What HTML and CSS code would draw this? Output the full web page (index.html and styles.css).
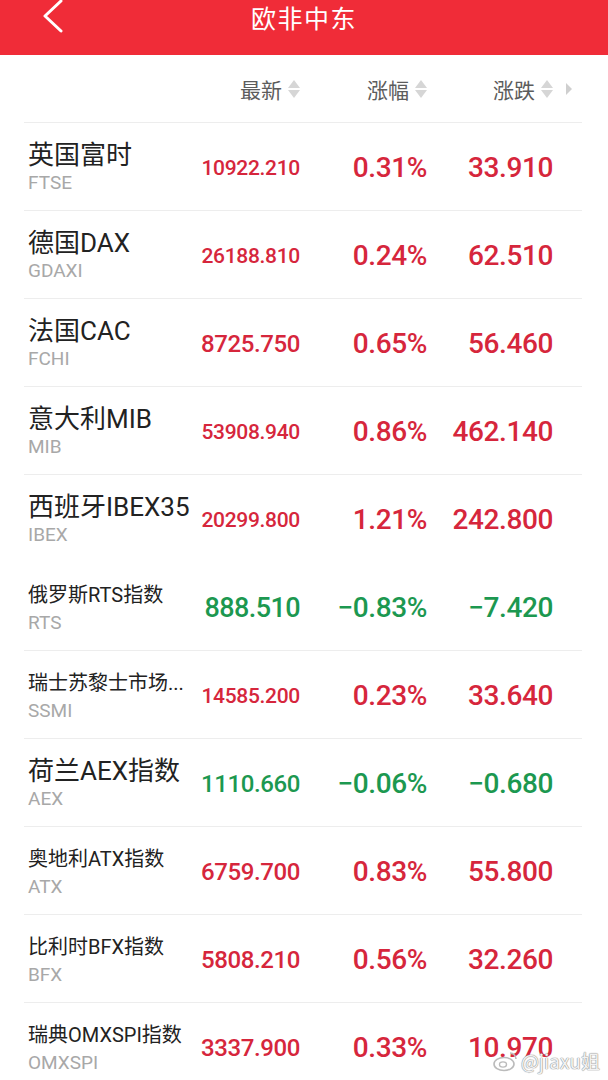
FILE: index.html
```html
<html>
<head>
    <meta charset="UTF-8">
    <meta name="viewport" content="width=device-width, initial-scale=1.0">
    <title>欧非中东</title>
    <link rel="stylesheet" href="styles.css">
</head>

<body>
<div class="page">
    <div class="top_bar">
        <svg class="back" width="24" height="34" viewBox="0 0 24 34">
            <polyline points="19,1 3,16 19,31" fill="none" stroke="#fff" stroke-width="3" stroke-linecap="round" stroke-linejoin="round"/>
        </svg>
        <div class="top_title">欧非中东</div>
    </div>

    <div class="list">
        <div class="row head">
            <div></div>
            <div class="col_head">最新<span class="sort"><i class="up"></i><i class="down"></i></span></div>
            <div class="col_head">涨幅<span class="sort"><i class="up"></i><i class="down"></i></span></div>
            <div class="col_head">涨跌<span class="sort"><i class="up"></i><i class="down"></i></span></div>
            <div class="more"><i></i></div>
        </div>

        <div class="row">
            <div class="name"><p class="big">英国富时</p><p class="code">FTSE</p></div>
            <div class="val red fit9">10922.210</div>
            <div class="val red">0.31%</div>
            <div class="val red">33.910</div>
        </div>
        <div class="row">
            <div class="name"><p class="big">德国DAX</p><p class="code">GDAXI</p></div>
            <div class="val red fit9">26188.810</div>
            <div class="val red">0.24%</div>
            <div class="val red">62.510</div>
        </div>
        <div class="row">
            <div class="name"><p class="big">法国CAC</p><p class="code">FCHI</p></div>
            <div class="val red fit8">8725.750</div>
            <div class="val red">0.65%</div>
            <div class="val red">56.460</div>
        </div>
        <div class="row">
            <div class="name"><p class="big">意大利MIB</p><p class="code">MIB</p></div>
            <div class="val red fit9">53908.940</div>
            <div class="val red">0.86%</div>
            <div class="val red">462.140</div>
        </div>
        <div class="row no_line">
            <div class="name"><p class="big">西班牙IBEX35</p><p class="code">IBEX</p></div>
            <div class="val red fit9">20299.800</div>
            <div class="val red">1.21%</div>
            <div class="val red">242.800</div>
        </div>
        <div class="row">
            <div class="name"><p class="small">俄罗斯RTS指数</p><p class="code">RTS</p></div>
            <div class="val green fit7">888.510</div>
            <div class="val green">−0.83%</div>
            <div class="val green">−7.420</div>
        </div>
        <div class="row">
            <div class="name"><p class="small">瑞士苏黎士市场...</p><p class="code">SSMI</p></div>
            <div class="val red fit9">14585.200</div>
            <div class="val red">0.23%</div>
            <div class="val red">33.640</div>
        </div>
        <div class="row">
            <div class="name"><p class="big">荷兰AEX指数</p><p class="code">AEX</p></div>
            <div class="val green fit8">1110.660</div>
            <div class="val green">−0.06%</div>
            <div class="val green">−0.680</div>
        </div>
        <div class="row">
            <div class="name"><p class="small">奥地利ATX指数</p><p class="code">ATX</p></div>
            <div class="val red fit8">6759.700</div>
            <div class="val red">0.83%</div>
            <div class="val red">55.800</div>
        </div>
        <div class="row">
            <div class="name"><p class="small">比利时BFX指数</p><p class="code">BFX</p></div>
            <div class="val red fit8">5808.210</div>
            <div class="val red">0.56%</div>
            <div class="val red">32.260</div>
        </div>
        <div class="row">
            <div class="name"><p class="small">瑞典OMXSPI指数</p><p class="code">OMXSPI</p></div>
            <div class="val red fit8">3337.900</div>
            <div class="val red">0.33%</div>
            <div class="val red">10.970</div>
        </div>
    </div>

    <div class="mark">
        <svg width="26" height="22" viewBox="0 0 26 22">
            <ellipse cx="11" cy="14" rx="10" ry="6.5" fill="none" stroke="#bbb" stroke-width="1.6"/>
            <ellipse cx="10" cy="14.5" rx="3.5" ry="2.6" fill="none" stroke="#bbb" stroke-width="1.4"/>
            <path d="M17 3 a6 6 0 0 1 6 6" fill="none" stroke="#bbb" stroke-width="1.6"/>
        </svg>
        <span>@jiaxu姐</span>
    </div>
</div>
</body>
</html>
```

FILE: styles.css
```css
* {
    margin: 0;
    padding: 0;
}

body {
    background: white;
    font-family: Roboto, "Noto Sans CJK SC", sans-serif;
}

.page {
    width: 608px;
    height: 1080px;
    overflow: hidden;
    position: relative;
}

.top_bar {
    height: 55px;
    background: rgb(240, 44, 56);
    display: flex;
    justify-content: center;
    position: relative;
}

.back {
    position: absolute;
    left: 42px;
    top: 0;
}

.top_title {
    color: white;
    font-family: "Noto Sans CJK SC", sans-serif;
    font-size: 25px;
    line-height: 34px;
    letter-spacing: 1.5px;
}

.list {
    padding: 0 26px 0 24px;
}

.row {
    height: 87px;
    border-bottom: 1px solid #ededed;
    display: grid;
    grid-template-columns: minmax(0, 1fr) 110px 127px 126px 29px;
    align-items: center;
    padding-left: 4px;
}

.row.no_line {
    border-bottom-color: transparent;
}

.row.head {
    height: 67px;
}

.col_head {
    display: flex;
    justify-content: flex-end;
    align-items: center;
    font-family: "Noto Sans CJK SC", sans-serif;
    font-size: 21px;
    color: #5c5c5c;
}

.sort {
    display: flex;
    flex-direction: column;
    gap: 2px;
    margin-left: 6px;
}

.sort i {
    width: 0;
    height: 0;
    border-left: 6px solid transparent;
    border-right: 6px solid transparent;
}

.sort .up {
    border-bottom: 8px solid #d6d6d6;
}

.sort .down {
    border-top: 8px solid #d6d6d6;
}

.more {
    display: flex;
    justify-content: flex-end;
    padding-right: 10px;
}

.more i {
    width: 0;
    height: 0;
    border-top: 6px solid transparent;
    border-bottom: 6px solid transparent;
    border-left: 6px solid #cfcfcf;
}

.name {
    white-space: nowrap;
    padding-top: 3px;
}

.name .big {
    font-size: 26px;
    line-height: 30px;
    color: #222;
}

.name .small {
    font-size: 20px;
    line-height: 30px;
    color: #222;
}

.name .code {
    font-size: 19px;
    line-height: 26px;
    color: #a8a8a8;
}

.val {
    text-align: right;
    font-size: 28px;
    font-weight: 500;
    letter-spacing: -0.4px;
    white-space: nowrap;
    margin-top: 2px;
}

.val.fit9 {
    font-size: 21px;
    letter-spacing: -0.3px;
}

.val.fit8 {
    font-size: 24px;
    letter-spacing: -0.4px;
}

.val.fit7 {
    font-size: 27px;
    letter-spacing: -0.6px;
}

.red {
    color: rgb(214, 38, 60);
}

.green {
    color: rgb(28, 152, 80);
}

.mark {
    position: absolute;
    right: 8px;
    bottom: 6px;
    display: flex;
    align-items: center;
    gap: 2px;
    color: rgba(255, 255, 255, 0.9);
    font-family: "Noto Sans CJK SC", sans-serif;
    font-size: 19px;
    text-shadow: 0 0 1px #999, 0 0 1px #999, 0 0 1px #999;
}
```
